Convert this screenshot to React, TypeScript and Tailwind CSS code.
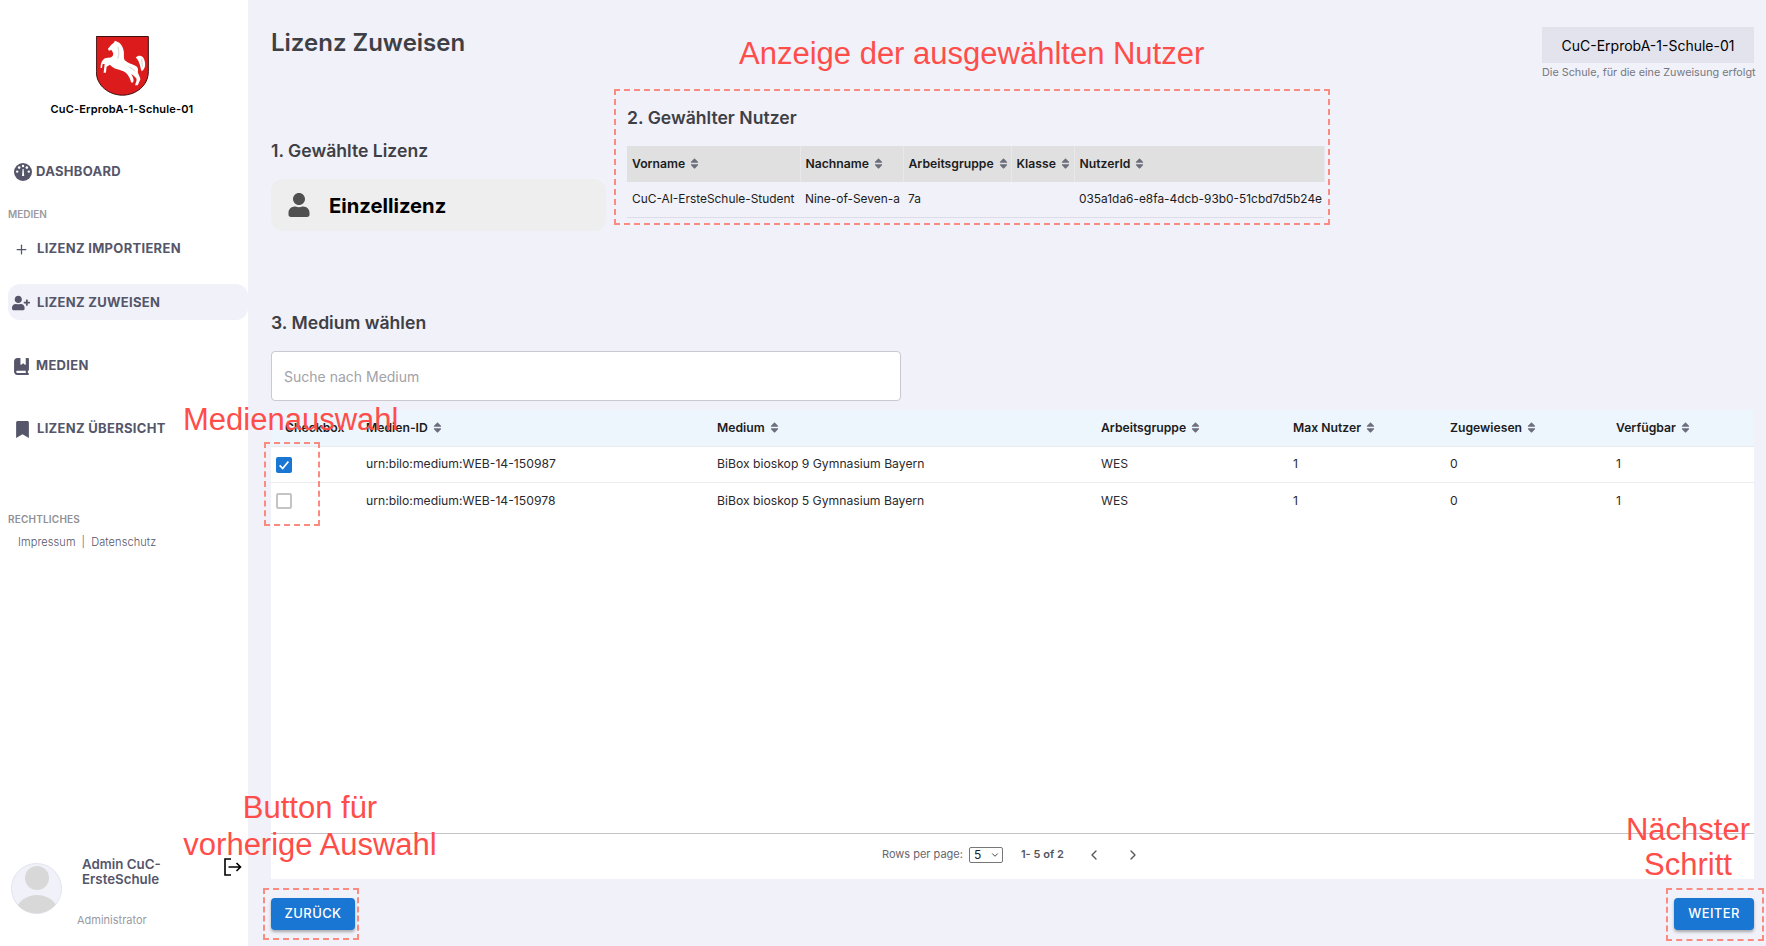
import React from "react";
import { Plus, ChevronLeft, ChevronRight, ChevronDown } from "lucide-react";
import { FaUserPlus, FaBookmark, FaUser, FaSort } from "react-icons/fa";
import { FaBookBookmark } from "react-icons/fa6";

const Shield = () => (
  <svg viewBox="286 108 160 180" className="w-[53px] h-[60px]">
    <path d="M287 109 H444 V215 C444 258 405 286 366 286 C326 286 287 258 287 215 Z" fill="#dc1c1c" stroke="#3a0f0f" strokeWidth="3" />
    <path
      d="M343 122 L350 125 C360 128 368 140 370 155 C371 165 369 172 372 180 C382 190 395 192 405 197 C412 200 415 208 412 216 C414 224 420 232 420 238 C418 244 414 250 412 256 L404 256 C406 248 410 242 408 236 C402 228 396 224 392 222 C398 232 402 240 398 248 L392 248 C390 236 384 226 376 218 C366 212 358 210 350 208 C340 206 332 198 328 194 L318 200 L316 218 L309 218 L312 192 L306 192 L304 204 L300 204 C300 190 304 178 316 174 L330 172 C336 170 338 166 338 160 C336 155 334 152 332 150 L325 152 L322 146 C328 140 334 130 340 128 Z"
      fill="#ffffff"
    />
    <path d="M406 172 C415 164 428 166 432 180 C436 192 436 206 424 214 C420 206 420 196 416 188 C414 180 410 176 406 172 Z" fill="#ffffff" />
    <path d="M352 140 C356 150 356 165 352 176 M384 200 C392 204 400 208 404 214 M424 176 L426 200" fill="none" stroke="#b8b8b8" strokeWidth="2" />
  </svg>
);

const Gauge = () => (
  <svg viewBox="0 0 18 18" className="w-[18px] h-[18px]">
    <circle cx="9" cy="9" r="9" fill="#55566a" />
    <circle cx="5.2" cy="4.6" r="1.3" fill="#fff" />
    <circle cx="9" cy="3" r="1.2" fill="#fff" />
    <circle cx="12.8" cy="4.6" r="1.3" fill="#fff" />
    <circle cx="3.2" cy="8.6" r="1.2" fill="#fff" />
    <circle cx="14.8" cy="8.6" r="1.2" fill="#fff" />
    <path d="M8 13 L8.6 6 H9.6 L10.2 13 Z" fill="#fff" />
  </svg>
);

const Logout = () => (
  <svg viewBox="0 0 18 18" className="w-[18px] h-[18px]" fill="none" stroke="#000" strokeWidth="1.6">
    <path d="M7 1 H1 V17 H7" />
    <path d="M4.5 9 H16.5 M12.5 5 L16.5 9 L12.5 13" />
  </svg>
);

const Avatar = () => (
  <svg viewBox="0 0 51 51" className="w-[51px] h-[51px]">
    <defs>
      <clipPath id="av">
        <circle cx="25.5" cy="25.5" r="25" />
      </clipPath>
    </defs>
    <circle cx="25.5" cy="25.5" r="25" fill="#f0f1f9" stroke="#e2e3ef" />
    <g clipPath="url(#av)" fill="#d8d8d8">
      <circle cx="26" cy="15" r="12" />
      <ellipse cx="26" cy="47" rx="20" ry="15" />
    </g>
  </svg>
);

function NavItem({ icon, label, className }: { icon: React.ReactNode; label: string; className: string }) {
  return (
    <div className={`flex items-center text-[13px] font-bold text-[#55566a] tracking-[0.3px] ${className}`}>
      {icon}
      <span>{label}</span>
    </div>
  );
}

const Sidebar = () => (
  <aside className="w-[248px] shrink-0 h-[946px] bg-white flex flex-col">
    <div className="flex flex-col items-center pt-[36px] pr-[4px]">
      <Shield />
      <div className="mt-[6px] text-[11px] leading-[14px] font-semibold text-black tracking-[0.15px]">CuC-ErprobA-1-Schule-01</div>
    </div>
    <NavItem className="mt-[46px] h-[20px] pl-[14px] gap-[4px]" icon={<Gauge />} label="DASHBOARD" />
    <div className="mt-[26px] pl-[8px] text-[10px] leading-[12px] font-semibold text-[#9a9a9f]">MEDIEN</div>
    <NavItem className="mt-[19px] h-[20px] pl-[14px] gap-[8px]" icon={<Plus size={15} strokeWidth={2} />} label="LIZENZ IMPORTIEREN" />
    <NavItem
      className="mt-[25px] h-[36px] ml-[8px] pl-[4px] pt-[1px] gap-[7px] bg-[#f0f1f9] rounded-xl"
      icon={<FaUserPlus size={18} />}
      label="LIZENZ ZUWEISEN"
    />
    <NavItem className="mt-[36px] h-[20px] pl-[13px] gap-[6px]" icon={<FaBookBookmark size={17} />} label="MEDIEN" />
    <NavItem className="mt-[43px] h-[20px] pl-[14px] gap-[6px]" icon={<FaBookmark size={17} />} label="LIZENZ ÜBERSICHT" />
    <div className="mt-[74px] pl-[8px] text-[10px] leading-[12px] font-semibold text-[#8f8f94] tracking-[0.2px]">RECHTLICHES</div>
    <div className="mt-[10px] pl-[18px] flex gap-[6px] text-[11px] leading-[14px] font-light text-[#55566a] tracking-[0.1px]">
      <span>Impressum</span>
      <span>|</span>
      <span>Datenschutz</span>
    </div>
    <div className="mt-auto pb-[19px] pl-[11px] relative">
      <div className="flex items-start">
        <div className="mt-[6px]"><Avatar /></div>
        <div className="ml-[20px] w-[142px] text-[13.3px] leading-[15px] font-semibold text-[#55566a]">
          Admin CuC-
          <br />
          ErsteSchule
        </div>
        <div className="mt-[1px]"><Logout /></div>
      </div>
      <div className="ml-[66px] -mt-[1px] text-[11px] leading-[14px] text-[#9a9aa3]">Administrator</div>
    </div>
  </aside>
);

const Sort = () => <FaSort size={13} className="inline-block ml-[3px] text-[#6d6e7c] align-[-2px]" />;

function Th({ children, nosort, bg }: { children: React.ReactNode; nosort?: boolean; bg: string }) {
  return (
    <th className={`${bg} text-left font-semibold text-[12.2px] text-[#1c1c20] px-[5px] whitespace-nowrap`}>
      {children}
      {!nosort && <Sort />}
    </th>
  );
}

const userCols = ["Vorname", "Nachname", "Arbeitsgruppe", "Klasse", "NutzerId"];
const userRow = ["CuC-AI-ErsteSchule-Student", "Nine-of-Seven-a", "7a", "", "035a1da6-e8fa-4dcb-93b0-51cbd7d5b24e"];
const userW = [173, 103, 108, 63, 250];

const mediaCols = ["Medien-ID", "Medium", "Arbeitsgruppe", "Max Nutzer", "Zugewiesen", "Verfügbar"];
const mediaRows = [
  ["urn:bilo:medium:WEB-14-150987", "BiBox bioskop 9 Gymnasium Bayern", "WES", "1", "0", "1"],
  ["urn:bilo:medium:WEB-14-150978", "BiBox bioskop 5 Gymnasium Bayern", "WES", "1", "0", "1"],
];
const mediaW = [88, 351, 384, 192, 157, 166, 145];

const Dash = ({ className }: { className: string }) => (
  <div className={`absolute border-2 border-dashed border-[#fb8a80] pointer-events-none ${className}`} />
);
const Note = ({ className, children }: { className: string; children: React.ReactNode }) => (
  <div className={`absolute font-['Liberation_Sans',sans-serif] text-[#ff4d4a] text-[31px] whitespace-nowrap ${className}`}>{children}</div>
);

export default function App() {
  return (
    <div className="relative w-[1766px] h-[946px] overflow-hidden flex bg-[#f0f1f9] font-['Inter',sans-serif]">
      <Sidebar />
      <main className="flex-1 h-[946px] pl-[23px] pr-[12px] flex flex-col">
        <header className="flex justify-between items-start h-[89px]">
          <h1 className="mt-[29px] text-[24px] leading-[28px] font-semibold text-[#3f3f46]">Lizenz Zuweisen</h1>
          <div className="mt-[27px] w-[212px]">
            <div className="h-[36px] bg-[#e2e3ec] flex items-center justify-center text-[14px] text-black">CuC-ErprobA-1-Schule-01</div>
            <div className="mt-[3px] text-[10.8px] leading-[14px] text-[#77777f] text-center whitespace-nowrap">Die Schule, für die eine Zuweisung erfolgt</div>
          </div>
        </header>

        <div className="flex h-[135px]">
          <section className="w-[335px] pt-[51px] shrink-0">
            <h2 className="text-[17.6px] leading-[22px] font-semibold text-[#3f3f46]">1. Gewählte Lizenz</h2>
            <div className="mt-[17px] h-[52px] bg-[#eeeeee] rounded-xl flex items-center pl-[16px] gap-[18px]">
              <FaUser size={24} className="text-[#505050]" />
              <span className="pt-[2px] text-[20.2px] font-bold text-black">Einzellizenz</span>
            </div>
          </section>
          <section className="ml-[21px] pt-[18px]">
            <h2 className="text-[17.6px] leading-[22px] font-semibold text-[#3f3f46]">2. Gewählter Nutzer</h2>
            <table className="mt-[17px] table-fixed border-collapse w-[697px]">
              <colgroup>
                {userW.map((w, i) => <col key={i} style={{ width: w }} />)}
              </colgroup>
              <thead>
                <tr className="h-[36px]">
                  {userCols.map((c) => <Th key={c} bg="bg-[#e0e0e0] border-r border-[#e8e8ec]">{c}</Th>)}
                </tr>
              </thead>
              <tbody>
                <tr className="h-[35px] border-b border-[#dcdce8]">
                  {userRow.map((c, i) => <td key={i} className="px-[5px] text-[11.9px] text-[#1c1c20] whitespace-nowrap">{c}</td>)}
                </tr>
              </tbody>
            </table>
          </section>
        </div>

        <h2 className="mt-[88px] text-[17.6px] leading-[22px] font-semibold text-[#3f3f46]">3. Medium wählen</h2>
        <div className="mt-[17px] w-[630px] h-[50px] bg-white border border-[#c9c9cf] rounded-[4px] flex items-center pl-[12px] text-[14px] text-[#a2a2a8]">Suche nach Medium</div>

        <div className="mt-[9px] w-[1483px] h-[469px] bg-white flex flex-col">
          <table className="table-fixed border-collapse w-full">
            <colgroup>
              {mediaW.map((w, i) => <col key={i} style={{ width: w }} />)}
            </colgroup>
            <thead>
              <tr className="h-[36px] border-b border-[#e9eaee]">
                <Th nosort bg="bg-[#edf5fd] pl-[14px]">Checkbox</Th>
                {mediaCols.map((c) => <Th key={c} bg="bg-[#edf5fd] pl-[7px]">{c}</Th>)}
              </tr>
            </thead>
            <tbody>
              {mediaRows.map((r, i) => (
                <tr key={i} className="h-[36px] border-b border-[#ededf0] last:border-b-0">
                  <td className="pl-[5px] pt-[1px]">
                    {i === 0 ? (
                      <div className="w-[16px] h-[16px] rounded-[2px] bg-[#1976d2] flex items-center justify-center">
                        <svg viewBox="0 0 16 16" className="w-[14px] h-[14px]" fill="none" stroke="#fff" strokeWidth="2"><path d="M3 8.5 L6.5 12 L13 4" /></svg>
                      </div>
                    ) : (
                      <div className="w-[16px] h-[16px] rounded-[2px] border-2 border-[#c4c4c4] bg-white" />
                    )}
                  </td>
                  {r.map((c, j) => <td key={j} className="pl-[7px] pt-[1px] text-[12.2px] text-[#2a2a2e] whitespace-nowrap">{c}</td>)}
                </tr>
              ))}
            </tbody>
          </table>
          <div className="mt-auto h-[46px] border-t border-[#c4c4c8] flex items-center pb-[4px] pl-[611px] text-[11px] text-[#66666e]">
            <span>Rows per page:</span>
            <span className="ml-[6px] w-[34px] h-[16px] border border-[#777] rounded-[2px] flex items-center justify-between pl-[4px] pr-[2px] text-[12px] text-[#222]">
              5<ChevronDown size={10} />
            </span>
            <span className="ml-[18px] font-semibold text-[#55555c]">1- 5 of 2</span>
            <ChevronLeft size={16} className="ml-[22px] text-[#555]" />
            <ChevronRight size={16} className="ml-[23px] text-[#555]" />
          </div>
        </div>

        <div className="mt-[19px] w-[1483px] flex justify-between">
          <button className="w-[84px] h-[32px] bg-[#1976d2] rounded-[4px] text-white text-[13px] font-medium tracking-[0.4px] shadow-[0_2px_3px_rgba(0,0,0,0.3)]">ZURÜCK</button>
          <button className="w-[80px] h-[32px] bg-[#1976d2] rounded-[4px] text-white text-[13px] font-medium tracking-[0.4px] shadow-[0_2px_3px_rgba(0,0,0,0.3)]">WEITER</button>
        </div>
      </main>

      <Dash className="left-[614px] top-[89px] w-[716px] h-[136px]" />
      <Dash className="left-[264px] top-[442px] w-[56px] h-[84px]" />
      <Dash className="left-[263px] top-[888px] w-[96px] h-[52px]" />
      <Dash className="left-[1666px] top-[888px] w-[98px] h-[53px]" />

      <Note className="left-[739px] top-[35px] leading-[38px]">Anzeige der ausgewählten Nutzer</Note>
      <Note className="left-[183px] top-[401px] leading-[38px]">Medienauswahl</Note>
      <Note className="left-[180px] top-[789px] w-[260px] text-center leading-[37px]">Button für<br />vorherige Auswahl</Note>
      <Note className="left-[1608px] top-[812px] w-[160px] text-center leading-[35px]">Nächster<br />Schritt</Note>
    </div>
  );
}
